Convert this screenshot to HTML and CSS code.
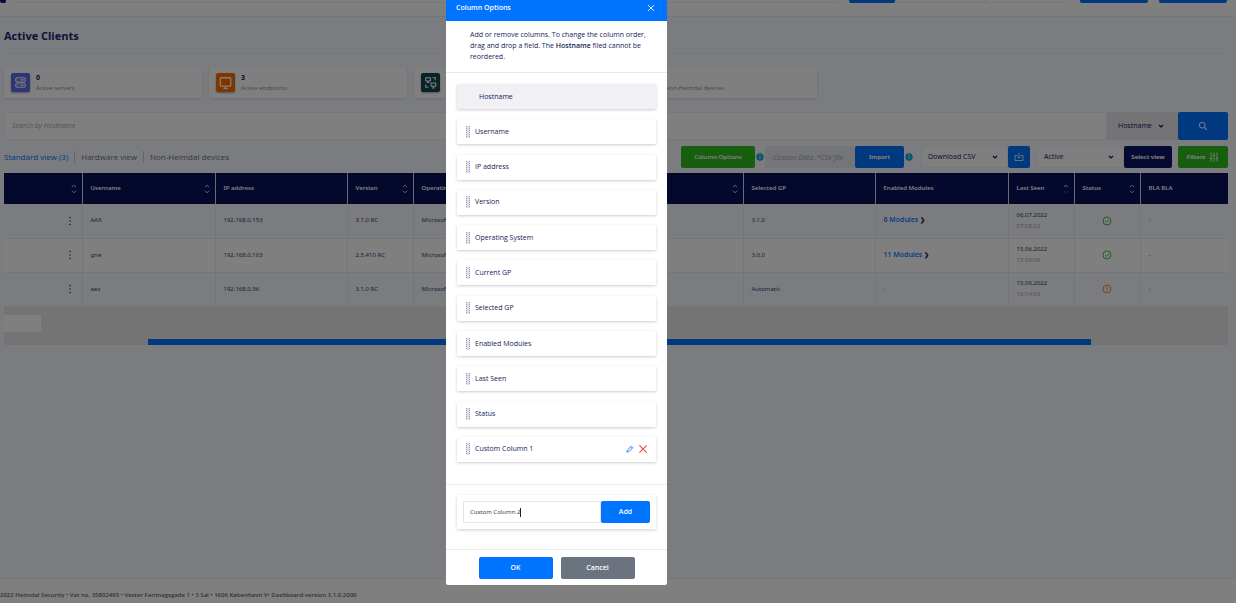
FILE: index.html
```html
<!DOCTYPE html>
<html lang="en">
<head>
<meta charset="utf-8">
<title>Active Clients</title>
<link rel="stylesheet" href="styles.css">
</head>
<body>
<svg class="sprite" aria-hidden="true">
  <symbol id="sort" viewBox="0 0 6 10"><path d="M1 3.2 3 1.2l2 2" fill="none" stroke="#fff" stroke-width=".8"/><path d="M1 6.800l2 2 2-2" fill="none" stroke="currentColor" stroke-width=".8"/></symbol>
  <symbol id="chevron" viewBox="0 0 6 6"><path d="M1 2l2 2 2-2" fill="none" stroke="currentColor" stroke-width="1.1"/></symbol>
  <symbol id="info" viewBox="0 0 8 8"><circle cx="4" cy="4" r="3.700" fill="#17a9d8"/><path d="M4 1.800v1M4 3.600v2.400" stroke="#fff" stroke-width=".8"/></symbol>
  <symbol id="ok" viewBox="0 0 10 10"><circle cx="5" cy="5" r="4" fill="none" stroke="#3fc43f"/><path d="M3.200 5l1.400 1.400 2.400-2.600" fill="none" stroke="#3fc43f"/></symbol>
  <symbol id="warn" viewBox="0 0 10 10"><circle cx="5" cy="5" r="4" fill="none" stroke="#f58a3c"/><path d="M5 2.800v2.800M5 6.400v1" stroke="#f58a3c"/></symbol>
  <symbol id="dots" viewBox="0 0 4 10"><g fill="#0a1464"><circle cx="2" cy="1.500" r=".7"/><circle cx="2" cy="5" r=".7"/><circle cx="2" cy="8.500" r=".7"/></g></symbol>
  <symbol id="grip" viewBox="0 0 4 14"><g shape-rendering="crispEdges"><path d="M2 1v12" stroke="#dfe1ee" stroke-width="2"/><path d="M.5 1v12M3.500 1v12" stroke="#dfe1ee"/><path d="M.5 1v12M3.500 1v12" stroke="#9497b8" stroke-dasharray="1 1"/></g></symbol>
</svg>

<header class="topbar">
  <span class="stub stub-navy"></span>
  <span class="stub stub-field"></span>
  <span class="stub stub-blue"></span>
  <span class="stub stub-cell"></span>
  <span class="stub stub-cell2"></span>
  <span class="stub stub-btn"></span>
  <span class="stub stub-btn"></span>
</header>

<main class="page">
  <h1>Active Clients</h1>
  <section class="cards">
    <article class="card">
      <span class="badge violet"><svg viewBox="0 0 18 18"><g fill="none" stroke="#fff"><rect x="4.500" y="4.500" width="9" height="4" rx="1.500"/><rect x="4.500" y="9.500" width="9" height="4" rx="1.500"/><path d="M6 6.500h1M6 11.500h1M9 6.500h3M9 11.500h3"/></g></svg></span>
      <div><strong>0</strong><span>Active servers</span></div>
    </article>
    <article class="card">
      <span class="badge orange"><svg viewBox="0 0 18 18"><g fill="none" stroke="#fff" stroke-width="1.200"><rect x="4" y="4.500" width="10" height="8" rx="1"/><path d="M7 14.500h4M9 12.500v2"/></g></svg></span>
      <div><strong>3</strong><span>Active endpoints</span></div>
    </article>
    <article class="card">
      <span class="badge teal"><svg viewBox="0 0 18 18"><g fill="none" stroke="#fff"><rect x="4.500" y="4.500" width="4.500" height="3"/><path d="M6.700 7.500v1.500M5.500 9h2.500M11 4.500h2.500V7M7 13.500H4.500V11"/><rect x="9.500" y="9.500" width="4.500" height="3"/><path d="M11.700 12.500V14M10.500 14.200h2.500"/></g></svg></span>
    </article>
    <article class="card wide">
      <span class="badge violet"></span>
      <div><strong>&nbsp;</strong><span>Non-Heimdal devices</span></div>
    </article>
  </section>

  <form class="search">
    <input type="text" placeholder="Search by Hostname" aria-label="Search by Hostname">
    <span class="select grey"><select aria-label="Search field"><option>Hostname</option></select><svg><use href="#chevron"/></svg></span>
    <button type="button" class="btn blue" aria-label="Search"><svg class="i10" viewBox="0 0 10 10"><circle cx="4.200" cy="4.200" r="2.900" fill="none" stroke="#fff"/><path d="M6.300 6.300l2.500 2.500" stroke="#fff" stroke-width="1.200"/></svg></button>
  </form>

  <div class="bar">
    <nav class="tabs"><a href="#standard" class="current">Standard view (3)</a><a href="#hardware">Hardware view</a><a href="#devices">Non-Heimdal devices</a></nav>
    <div class="tools">
      <button type="button" class="btn green options">Column Options</button>
      <svg class="info"><use href="#info"/></svg>
      <input class="csv" type="text" placeholder="Custom Data .*CSV file" aria-label="Custom data file">
      <button type="button" class="btn blue import">Import</button>
      <svg class="info"><use href="#info"/></svg>
      <span class="select download"><select aria-label="Download format"><option>Download CSV</option></select><svg><use href="#chevron"/></svg></span>
      <button type="button" class="btn blue get" aria-label="Download"><svg class="i10" viewBox="0 0 10 10"><path d="M3.200 3.500H1v5h8v-5H6.800M5 .8v5M3.200 4.500 5 6.300l1.800-1.800" fill="none" stroke="#fff" stroke-width=".8"/></svg></button>
      <span class="select active"><select aria-label="Client state"><option>Active</option></select><svg><use href="#chevron"/></svg></span>
      <button type="button" class="btn navy view">Select view</button>
      <button type="button" class="btn green filters">Filters <svg class="i10" viewBox="0 0 10 10"><path d="M2 .5v9M5 .5v9M8 .5v9M.8 6.500h2.400M3.800 3.500h2.400M6.800 6.500h2.400" stroke="#fff" stroke-width=".8"/></svg></button>
    </div>
  </div>

  <table>
    <colgroup><col class="c78"><col class="c133"><col class="c132"><col class="c66"><col><col class="c132"><col class="c132"><col class="c133"><col class="c66"><col class="c66"><col class="c88"></colgroup>
    <thead><tr>
      <th><div><span></span><svg><use href="#sort"/></svg></div></th>
      <th><div>Username<svg><use href="#sort"/></svg></div></th>
      <th><div>IP address</div></th>
      <th><div>Version<svg><use href="#sort"/></svg></div></th>
      <th><div>Operating</div></th>
      <th><div><span></span><svg><use href="#sort"/></svg></div></th>
      <th><div>Selected GP</div></th>
      <th><div>Enabled Modules</div></th>
      <th><div>Last Seen<svg class="sorted"><use href="#sort"/></svg></div></th>
      <th><div>Status<svg><use href="#sort"/></svg></div></th>
      <th><div>BLA BLA</div></th>
    </tr></thead>
    <tbody>
      <tr><td class="menu"><svg><use href="#dots"/></svg></td><td>AAX</td><td>192.168.0.153</td><td>3.1.0 RC</td><td>Microsoft</td><td></td><td>3.1.0</td><td><a href="#m1">6 Modules <b>❯</b></a></td><td>06.07.2022<small>07:58:02</small></td><td class="state"><svg><use href="#ok"/></svg></td><td>-</td></tr>
      <tr><td class="menu"><svg><use href="#dots"/></svg></td><td>gne</td><td>192.168.0.103</td><td>2.5.410 RC</td><td>Microsoft</td><td></td><td>3.0.0</td><td><a href="#m2">11 Modules <b>❯</b></a></td><td>15.06.2022<small>15:56:06</small></td><td class="state"><svg><use href="#ok"/></svg></td><td>-</td></tr>
      <tr><td class="menu"><svg><use href="#dots"/></svg></td><td>aax</td><td>192.168.0.36</td><td>3.1.0 RC</td><td>Microsoft</td><td></td><td>Automatic</td><td>-</td><td>15.06.2022<small>10:14:59</small></td><td class="state"><svg><use href="#warn"/></svg></td><td>-</td></tr>
    </tbody>
  </table>
  <div class="pager"><span class="pagebox"></span><div class="scroll"></div></div>
</main>
<footer>2022 Heimdal Security • Vat no. 35802495 • Vester Farimagsgade 1 • 3 Sal • 1606 København V• Dashboard version 3.1.0.2000</footer>

<div class="overlay">
  <section class="modal" role="dialog" aria-labelledby="title">
    <header><h2 id="title">Column Options</h2><button type="button" aria-label="Close"><svg viewBox="0 0 8 8"><path d="M1 1l6 6M7 1 1 7" stroke="#fff" stroke-width=".9"/></svg></button></header>
    <p class="hint">Add or remove columns. To change the column order, drag and drop a field. The <b>Hostname</b> filed cannot be reordered.</p>
    <ul class="fields">
      <li class="fixed">Hostname</li>
      <li><svg class="grip"><use href="#grip"/></svg>Username</li>
      <li><svg class="grip"><use href="#grip"/></svg>IP address</li>
      <li><svg class="grip"><use href="#grip"/></svg>Version</li>
      <li><svg class="grip"><use href="#grip"/></svg>Operating System</li>
      <li><svg class="grip"><use href="#grip"/></svg>Current GP</li>
      <li><svg class="grip"><use href="#grip"/></svg>Selected GP</li>
      <li><svg class="grip"><use href="#grip"/></svg>Enabled Modules</li>
      <li><svg class="grip"><use href="#grip"/></svg>Last Seen</li>
      <li><svg class="grip"><use href="#grip"/></svg>Status</li>
      <li><svg class="grip"><use href="#grip"/></svg><span class="grow">Custom Column 1</span>
        <button type="button" aria-label="Edit"><svg viewBox="0 0 9 9"><path d="M1 8l.6-2.300L6 1.300l1.700 1.700L3.300 7.400zM5 2.300 6.700 4" fill="none" stroke="#2f86f6" stroke-width="1.100"/></svg></button>
        <button type="button" aria-label="Delete"><svg viewBox="0 0 9 9"><path d="M.5.5l8 8M8.500.5l-8 8" stroke="#f5433c" stroke-width="1.200"/></svg></button></li>
    </ul>
    <div class="add"><form>
      <label class="entry"><input type="text" value="Custom Column 2" size="12" aria-label="New column name"><i class="caret"></i></label>
      <button type="button" class="btn blue">Add</button>
    </form></div>
    <div class="actions"><button type="button" class="btn blue">OK</button><button type="button" class="btn slate">Cancel</button></div>
  </section>
</div>
</body>
</html>
```
FILE: styles.css
```css
* { box-sizing: border-box; }
body {
  margin: 0; min-height: 100vh; display: flex; flex-direction: column;
  font: 7px/10px "Open Sans", sans-serif; color: #0a1464;
  background: #f7f9ff; overflow: hidden;
}
button, input, select { font: inherit; color: inherit; border: 0; margin: 0; padding: 0; background: none; min-width: 0; }
svg { display: block; flex: none; }
a { color: inherit; text-decoration: none; }
.sprite { position: absolute; width: 0; height: 0; }

.topbar { height: 17px; display: flex; align-items: flex-start; background: #fff; border-bottom: 1px solid #e8eaf0; padding-right: 9px; }
.stub { height: 3px; border-radius: 0 0 2px 2px; }
.stub-navy { width: 6px; background: #0a1464; }
.stub-field { flex: 1; margin: 0 11px 0 7px; border: 1px solid #eceef5; border-top: 0; }
.stub-blue { width: 46px; background: #0073ff; }
.stub-cell { width: 90px; border: 1px solid #eceef5; border-top: 0; }
.stub-cell2 { width: 82px; margin-right: 2px; border: 1px solid #eceef5; border-top: 0; }
.stub-btn { width: 68px; margin-left: 11px; background: #0073ff; }

.page { flex: 1; padding: 0 8px 0 4px; }
h1 { margin: 0; padding: 10px 0 9px; font-size: 11px; line-height: 17px; font-weight: 700; color: #1a2470; border-bottom: 1px solid #eceef5; }
.cards { display: grid; grid-template-columns: repeat(4, 198px); gap: 7px; padding: 13px 0 14px; }
.card { display: flex; align-items: center; gap: 6px; height: 31px; padding: 0 7px; font-size: 6px; background: #fff; border-radius: 2px; box-shadow: 0 1px 3px #0002; }
.card.wide { gap: 20px; }
.card strong, .card span { display: block; }
.card strong { font-size: 7px; }
.card div span { color: #8a8b98; }
.badge { width: 19px; height: 19px; border-radius: 2px; box-shadow: 0 1px 2px #0005; }
.violet { background: #5c6de8; } .orange { background: #ff6a00; } .teal { background: #0d4650; }

.btn { display: flex; align-items: center; justify-content: center; gap: 4px; color: #fff; font-weight: 600; border-radius: 2px; cursor: pointer; }
.blue { background: #0073ff; } .green { background: #2fbe1f; } .navy { background: #0a1464; } .slate { background: #6b747e; }
.i10 { width: 10px; height: 10px; }
.select { display: grid; align-items: center; background: #fff; border: 1px solid #f0f2f8; }
.select > * { grid-area: 1 / 1; }
.select select { appearance: none; width: 100%; height: 100%; padding-left: 6px; }
.select svg { width: 6px; height: 6px; justify-self: end; margin-right: 9px; pointer-events: none; }
.select.grey { width: 71px; background: #e8e8ec; border: 0; }
.grey select { padding-left: 11px; }
.grey svg { margin-right: 14px; }

.search { display: flex; height: 28px; }
.search input { flex: 1; padding: 0 7px; background: #fff; border: 1px solid #eceef8; }
.search .btn { width: 50px; }
::placeholder { color: #a2a4b0; font-style: italic; opacity: 1; }

.bar { display: flex; align-items: center; justify-content: space-between; padding: 6px 0 5px; }
.tabs { display: flex; font-size: 8px; line-height: 12px; font-weight: 500; color: #6a6d82; }
.tabs a + a { margin-left: 6px; padding-left: 6px; border-left: 1px solid #c4c6ce; }
.tabs .current { color: #0073ff; }
.tools { display: flex; align-items: center; height: 22px; }
.tools > :not(.info) { height: 22px; }
.info { width: 8px; height: 8px; margin: 0 1px; }
.options { width: 74px; font: 600 6px "Noto Sans", sans-serif; }
.csv { width: 90px; padding-left: 8px; background: #e9eaee; }
.import { width: 49px; } .download { width: 87px; margin-left: 7px; } .get { width: 22px; }
.active { width: 87px; margin-left: 7px; } .view { width: 48px; } .filters { width: 50px; margin-left: 6px; }
.view, .filters, .import { font: 700 6px "Noto Sans", sans-serif; }

table { width: 100%; table-layout: fixed; border-collapse: collapse; font-family: "Noto Sans", "Open Sans", sans-serif; font-size: 6px; line-height: 11px; color: #343a76; }
.c66 { width: 66px; } .c78 { width: 78px; } .c88 { width: 88px; } .c132 { width: 132px; } .c133 { width: 133px; }
th { height: 31px; padding: 0 5px 0 8px; text-align: left; font-weight: 600; color: #fff; background: #08105a; }
th div { display: flex; align-items: center; justify-content: space-between; white-space: nowrap; }
th svg { width: 6px; height: 10px; }
.sorted { color: #0073ff; }
th + th { border-left: 1px solid #d5d7e2; }
td { height: 34px; padding: 0 8px; white-space: nowrap; overflow: hidden; }
td + td { border-left: 1px solid #e9ebf1; }
tbody tr { border-bottom: 1px solid #e9ebf1; }
tbody tr:nth-child(2) { background: #fff; }
td small { display: block; font-size: 6px; color: #a4a5ae; }
td a { font: 600 7px "Open Sans", sans-serif; color: #0073ff; }
td a b { font-size: 6px; color: #0a1464; }
.menu svg { width: 4px; height: 10px; margin-left: auto; margin-right: 2px; }
.state svg { width: 10px; height: 10px; margin: 0 auto; }
.pager { height: 38px; background: #e8e8ea; display: flex; flex-direction: column; justify-content: space-between; }
.pagebox { width: 37px; height: 17px; margin-top: 8px; background: #fff; }
.scroll { height: 6px; margin: 0 137px 0 144px; background: #0073ff; }
footer { height: 25px; padding-top: 11px; background: #fff; border-top: 1px solid #eceef2; font-size: 6px; font-weight: 600; color: #62657a; }

.overlay { position: fixed; inset: 0; display: flex; justify-content: center; align-items: flex-start; padding-right: 123px; background: rgba(0, 0, 0, .5); }
.modal { width: 221px; background: #fff; border-radius: 0 0 2px 2px; color: #14235a; }
.modal header { display: flex; justify-content: space-between; align-items: center; padding: 2px 12px 7px 10px; background: #0073ff; color: #fff; }
h2 { margin: 0; font-size: 7px; line-height: 12px; font-weight: 600; }
.modal svg { width: 8px; height: 8px; }
.hint { margin: 0; padding: 8px 18px 10px 24px; line-height: 11px; border-bottom: 1px solid #e6e7ec; }
.hint b { font-weight: 600; }
.fields { list-style: none; margin: 0; min-height: 412px; padding: 11px 11px 22px; display: flex; flex-direction: column; justify-content: space-between; border-bottom: 1px solid #e9eaee; }
.fields li { display: flex; align-items: center; gap: 5px; height: 25px; padding: 0 9px; box-shadow: 0 1px 3px #0003; border-radius: 1px; }
.fields .fixed { padding-left: 22px; background: #f0f0f5; }
.fields .grip { width: 4px; height: 14px; }
.grow { flex: 1; }
.add { padding: 10px 11px 20px; border-bottom: 1px solid #e9eaee; }
.add form { display: flex; padding: 6px; box-shadow: 0 1px 3px #0003; }
.entry { flex: 1; display: flex; align-items: center; height: 22px; padding-left: 6px; border: 1px solid #e3e5ea; color: #3c3f52; font-family: "Noto Sans", sans-serif; font-size: 6px; }
.entry input { field-sizing: content; outline: 0; }
.caret { width: 1px; height: 9px; background: #222; }
.add .btn { width: 49px; }
.actions { display: flex; justify-content: center; gap: 8px; padding: 7px 0 6px; }
.actions .btn { width: 74px; height: 22px; }
```
